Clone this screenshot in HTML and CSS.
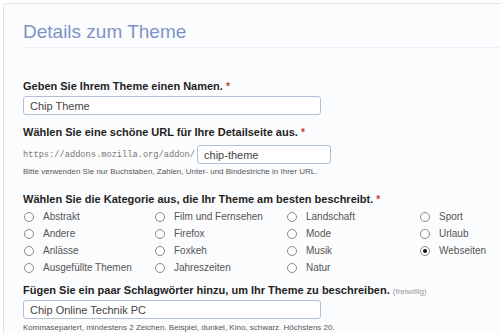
FILE: index.html
```html
<!DOCTYPE html>
<html lang="de">
<head>
<meta charset="UTF-8">
<meta name="viewport" content="width=device-width, initial-scale=1.0">
<title>Details zum Theme</title>
<link rel="stylesheet" href="styles.css">
</head>
<body>
    <div class="panel">
        <div class="panel-head">
            <h2>Details zum Theme</h2>
        </div>

        <div class="field field-name">
            <label for="name">Geben Sie Ihrem Theme einen Namen. <span class="req">*</span></label>
            <input type="text" id="name" class="text-input wide" value="Chip Theme">
        </div>

        <div class="field field-url">
            <label for="slug">Wählen Sie eine schöne URL für Ihre Detailseite aus. <span class="req">*</span></label>
            <div class="url-row">
                <span class="url-prefix">https://addons.mozilla.org/addon/</span>
                <input type="text" id="slug" class="text-input slug" value="chip-theme">
            </div>
            <p class="hint">Bitte verwenden Sie nur Buchstaben, Zahlen, Unter- und Bindestriche in Ihrer URL.</p>
        </div>

        <div class="field field-cat">
            <label>Wählen Sie die Kategorie aus, die Ihr Theme am besten beschreibt. <span class="req">*</span></label>
            <div class="radio-grid">
                <label class="radio"><input type="radio" name="cat"> Abstrakt</label>
                <label class="radio"><input type="radio" name="cat"> Film und Fernsehen</label>
                <label class="radio"><input type="radio" name="cat"> Landschaft</label>
                <label class="radio"><input type="radio" name="cat"> Sport</label>

                <label class="radio"><input type="radio" name="cat"> Andere</label>
                <label class="radio"><input type="radio" name="cat"> Firefox</label>
                <label class="radio"><input type="radio" name="cat"> Mode</label>
                <label class="radio"><input type="radio" name="cat"> Urlaub</label>

                <label class="radio"><input type="radio" name="cat"> Anlässe</label>
                <label class="radio"><input type="radio" name="cat"> Foxkeh</label>
                <label class="radio"><input type="radio" name="cat"> Musik</label>
                <label class="radio"><input type="radio" name="cat" checked> Webseiten</label>

                <label class="radio"><input type="radio" name="cat"> Ausgefüllte Themen</label>
                <label class="radio"><input type="radio" name="cat"> Jahreszeiten</label>
                <label class="radio"><input type="radio" name="cat"> Natur</label>
            </div>
        </div>

        <div class="field field-tags">
            <label for="tags">Fügen Sie ein paar Schlagwörter hinzu, um Ihr Theme zu beschreiben. <span class="opt">(freiwillig)</span></label>
            <input type="text" id="tags" class="text-input wide" value="Chip Online Technik PC">
            <p class="hint">Kommasepariert, mindestens 2 Zeichen. Beispiel, dunkel, Kino, schwarz. Höchstens 20.</p>
        </div>
    </div>
</body>
</html>
```

FILE: styles.css
```css
body {
    margin: 0;
    background-color: #fff;
    font-family: "Liberation Sans", Arial, sans-serif;
    color: #222;
}

.panel {
    margin: 3px 0 0 3px;
    border: 1px solid #dde2e8;
    border-right: none;
    border-bottom: none;
    border-top-left-radius: 5px;
    background-color: #fbfcfd;
    padding: 16px 0 0 19px;
    height: 330px;
    box-sizing: border-box;
}

.panel-head {
    border-bottom: 1px solid #eceff3;
    padding-bottom: 3px;
}

h2 {
    margin: 0;
    font-size: 19px;
    line-height: 24px;
    font-weight: normal;
    color: #7f93c6;
}

.field > label {
    display: block;
    font-size: 11px;
    line-height: 16px;
    font-weight: bold;
    color: #1f1f1f;
}

.req {
    color: #c0392b;
    font-size: 10px;
}

.opt {
    color: #9a9a9a;
    font-size: 8px;
    font-weight: normal;
}

.text-input {
    display: block;
    box-sizing: border-box;
    height: 19px;
    border: 1px solid #b3c0d4;
    border-radius: 3px;
    background-color: #fff;
    padding: 0 6px;
    font-family: "Liberation Sans", Arial, sans-serif;
    font-size: 11px;
    color: #444;
    outline: none;
}

.wide {
    width: 298px;
}

.field-name {
    margin-top: 30px;
}

.field-name label {
    margin-bottom: 1px;
}

.field-url {
    margin-top: 9px;
}

.url-row {
    display: flex;
    align-items: center;
    margin-top: 4px;
}

.url-prefix {
    font-family: "Liberation Mono", "Courier New", monospace;
    font-size: 8.7px;
    color: #777;
}

.slug {
    width: 134px;
    margin-left: 2px;
}

.hint {
    margin: 2px 0 0 0;
    font-size: 8px;
    line-height: 12px;
    color: #555;
}

.field-cat {
    margin-top: 13px;
}

.radio-grid {
    display: grid;
    grid-template-columns: 131px 132px 133px auto;
    padding-left: 1px;
}

.radio {
    display: flex;
    align-items: center;
    height: 17px;
    font-size: 10px;
    color: #555;
}

.radio input {
    -webkit-appearance: none;
    appearance: none;
    width: 10px;
    height: 10px;
    margin: 0 9px 0 0;
    border: 1px solid #8a8a8a;
    border-radius: 50%;
    background-color: #fff;
    position: relative;
}

.radio input:checked::after {
    content: "";
    position: absolute;
    left: 2px;
    top: 2px;
    width: 4px;
    height: 4px;
    border-radius: 50%;
    background-color: #111;
}

.field-tags {
    margin-top: 6px;
}

.field-tags .hint {
    margin-top: 3px;
}
```
